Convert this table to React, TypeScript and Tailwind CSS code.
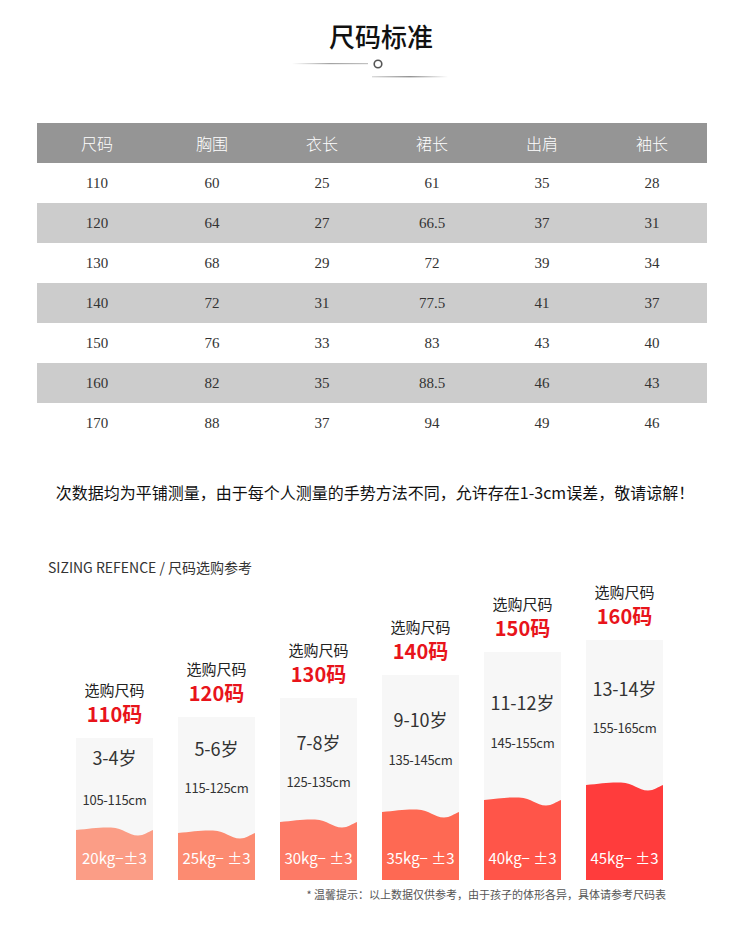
const headers = ["尺码", "胸围", "衣长", "裙长", "出肩", "袖长"];

const rows = [
  ["110", "60", "25", "61", "35", "28"],
  ["120", "64", "27", "66.5", "37", "31"],
  ["130", "68", "29", "72", "39", "34"],
  ["140", "72", "31", "77.5", "41", "37"],
  ["150", "76", "33", "83", "43", "40"],
  ["160", "82", "35", "88.5", "46", "43"],
  ["170", "88", "37", "94", "49", "46"],
];

const bars = [
  { size: "110码", age: "3-4岁", cm: "105-115cm", kg: "20kg−±3", h: "h-[142px]", red: "h-[43px]", color: "#fb9d86", agePt: "pt-[7px]", cmMt: "mt-[22px]" },
  { size: "120码", age: "5-6岁", cm: "115-125cm", kg: "25kg− ±3", h: "h-[163px]", red: "h-[40px]", color: "#fc8b71", agePt: "pt-[19px]", cmMt: "mt-[19px]" },
  { size: "130码", age: "7-8岁", cm: "125-135cm", kg: "30kg− ±3", h: "h-[182px]", red: "h-[51px]", color: "#fd7a66", agePt: "pt-[32px]", cmMt: "mt-[19px]" },
  { size: "140码", age: "9-10岁", cm: "135-145cm", kg: "35kg− ±3", h: "h-[205px]", red: "h-[61px]", color: "#fe6953", agePt: "pt-[32px]", cmMt: "mt-[20px]" },
  { size: "150码", age: "11-12岁", cm: "145-155cm", kg: "40kg− ±3", h: "h-[228px]", red: "h-[73px]", color: "#ff5549", agePt: "pt-[38px]", cmMt: "mt-[20px]" },
  { size: "160码", age: "13-14岁", cm: "155-165cm", kg: "45kg− ±3", h: "h-[240px]", red: "h-[88px]", color: "#ff3c3c", agePt: "pt-[36px]", cmMt: "mt-[19px]" },
];

function Divider() {
  return (
    <svg width="160" height="24" viewBox="0 0 160 24" className="block">
      <defs>
        <linearGradient id="dl" x1="0" x2="1" y1="0" y2="0">
          <stop offset="0" stopColor="#999" stopOpacity="0" />
          <stop offset="0.5" stopColor="#999" stopOpacity="0.9" />
          <stop offset="1" stopColor="#999" stopOpacity="0.6" />
        </linearGradient>
        <linearGradient id="dr" x1="0" x2="1" y1="0" y2="0">
          <stop offset="0" stopColor="#888" stopOpacity="0.3" />
          <stop offset="0.5" stopColor="#888" stopOpacity="0.9" />
          <stop offset="1" stopColor="#888" stopOpacity="0" />
        </linearGradient>
      </defs>
      <rect x="2" y="7" width="76" height="1.2" fill="url(#dl)" />
      <circle cx="88" cy="8" r="3.8" fill="none" stroke="#555" strokeWidth="1.6" />
      <rect x="82" y="20" width="76" height="1.4" fill="url(#dr)" />
    </svg>
  );
}

function Wave({ color }: { color: string }) {
  return (
    <svg width="77" height="10" viewBox="0 0 77 10" preserveAspectRatio="none" className="block">
      <path d="M0,3 C14,1.5 24,0 35,0.5 C48,1 52,8.5 62,8.5 C68,8.5 72,5 77,3 L77,10 L0,10 Z" fill={color} />
    </svg>
  );
}

export default function App() {
  return (
    <div className="w-[750px] h-[934px] bg-white overflow-hidden font-['Noto_Sans_CJK_SC',sans-serif]">
      <div className="pt-[20px] pl-[12px] text-center text-[26px] leading-[32px] font-medium text-[#111]">尺码标准</div>
      <div className="mt-[4px] pl-[290px]">
        <Divider />
      </div>

      <div className="mx-[37px] mt-[43px] w-[670px]">
        <div className="grid grid-cols-[120px_110px_110px_110px_110px_110px] h-[40px] bg-[#959595] items-center text-center text-[16px] text-white font-light">
          {headers.map((h) => (
            <div key={h}>{h}</div>
          ))}
        </div>
        {rows.map((r, i) => (
          <div
            key={r[0]}
            className={`grid grid-cols-[120px_110px_110px_110px_110px_110px] h-[40px] items-center text-center text-[15px] text-[#333] font-['Liberation_Serif','Noto_Sans_CJK_SC',serif] ${i % 2 === 1 ? "bg-[#cccccc]" : "bg-white"}`}
          >
            {r.map((c, j) => (
              <div key={j}>{c}</div>
            ))}
          </div>
        ))}
      </div>

      <div className="mt-[39px] text-center text-[16px] leading-[20px] text-[#111]">
        次数据均为平铺测量，由于每个人测量的手势方法不同，允许存在1-3cm误差，敬请谅解！
      </div>

      <div className="mt-[56px] pl-[48px] text-[14px] leading-[18px] text-[#333]">
        SIZING REFENCE / 尺码选购参考
      </div>

      <div className="h-[304px] flex items-end gap-[25px] pl-[76px]">
        {bars.map((b) => (
          <div key={b.size} className="w-[77px] flex flex-col items-center">
            <div className="text-[15px] leading-[22px] text-[#222]">选购尺码</div>
            <div className="text-[20px] leading-[26px] font-bold text-[#e8141b] mb-[11px]">{b.size}</div>
            <div className={`w-[77px] ${b.h} bg-[#f7f7f7] flex flex-col items-center`}>
              <div className={`${b.agePt} text-[18px] leading-[24px] text-[#333]`}>{b.age}</div>
              <div className={`${b.cmMt} text-[13px] leading-[18px] text-[#333] tracking-[-0.3px]`}>{b.cm}</div>
              <div className="mt-auto w-full">
                <Wave color={b.color} />
                <div className={`${b.red} w-full flex items-end justify-center pb-[12px]`} style={{ background: b.color }}>
                  <span className="text-[15px] leading-[20px] text-white">{b.kg}</span>
                </div>
              </div>
            </div>
          </div>
        ))}
      </div>

      <div className="mt-[6px] pr-[84px] text-right text-[11px] leading-[16px] text-[#555]">
        * 温馨提示：以上数据仅供参考，由于孩子的体形各异，具体请参考尺码表
      </div>
    </div>
  );
}
